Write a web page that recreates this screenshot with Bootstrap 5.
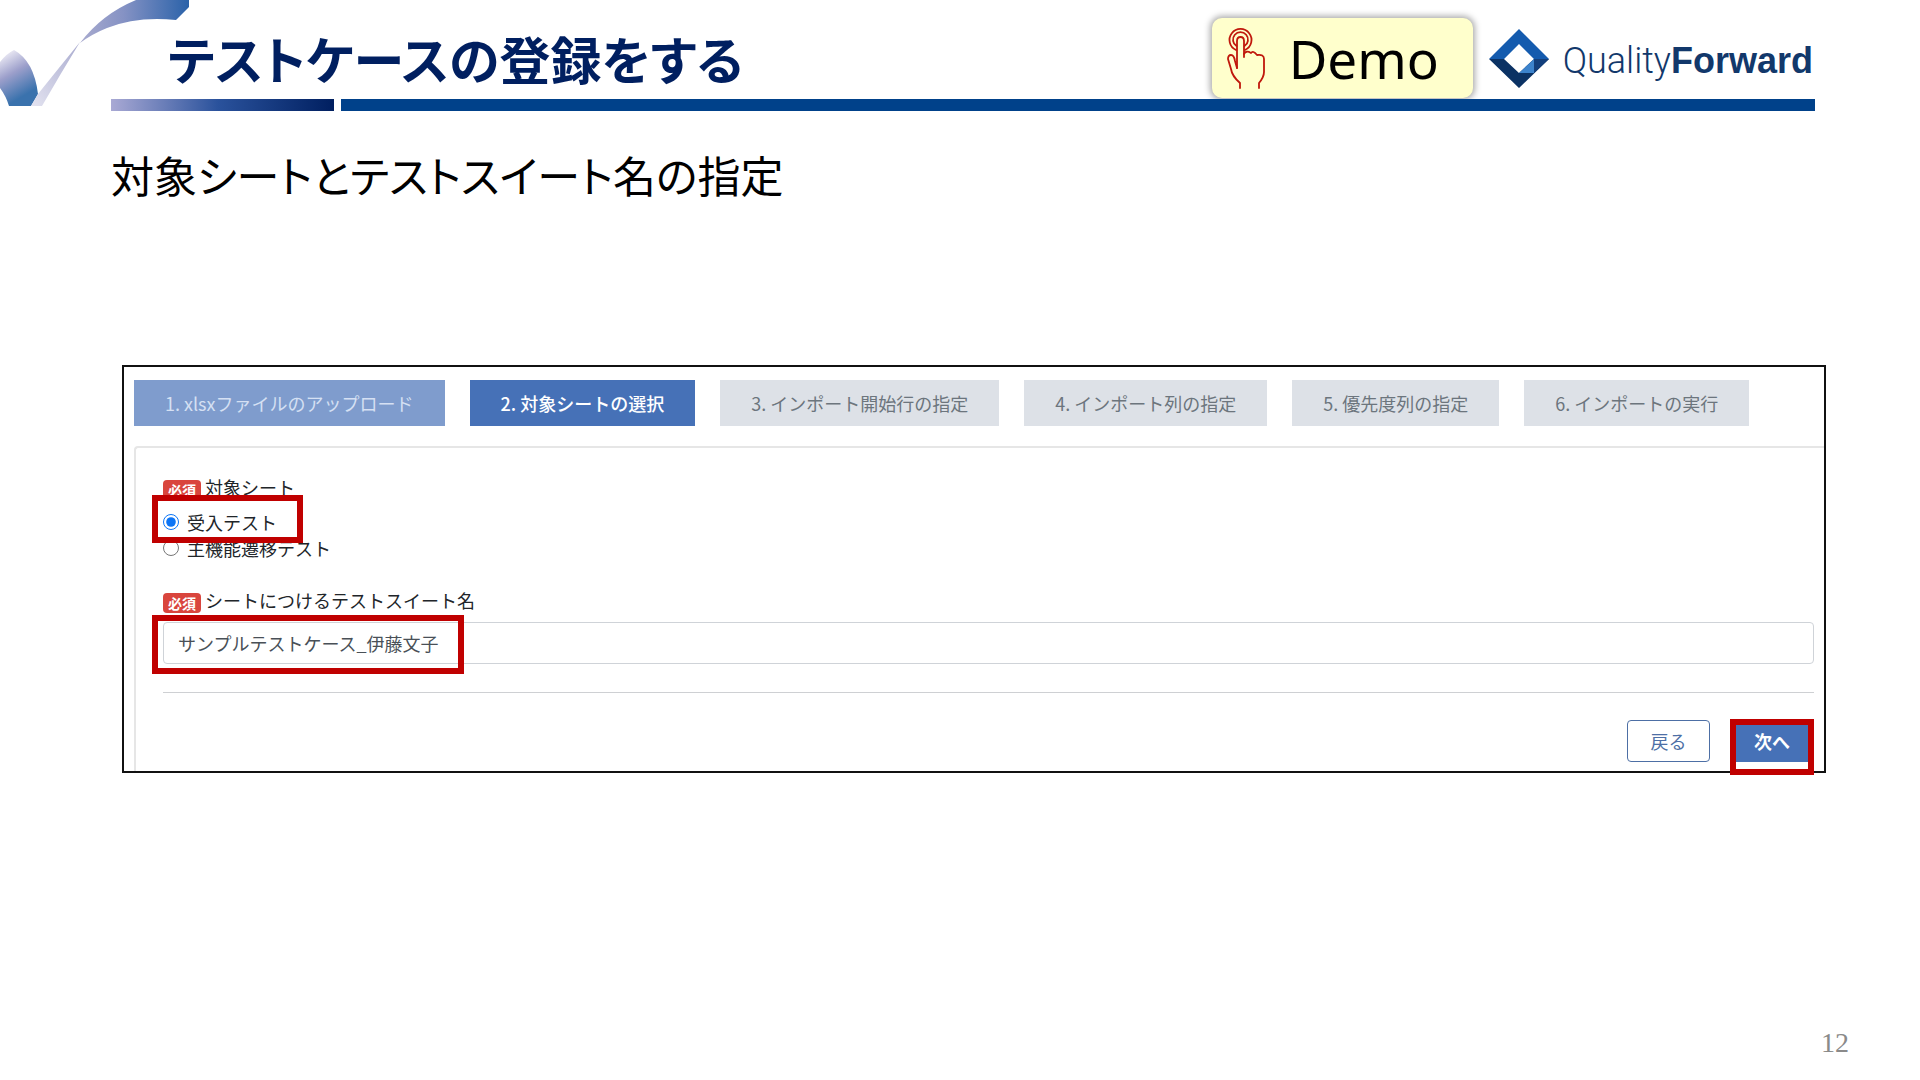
<!DOCTYPE html>
<html lang="ja">
<head>
<meta charset="utf-8">
<meta name="viewport" content="width=device-width, initial-scale=1">
<title>テストケースの登録をする</title>
<link href="https://cdn.jsdelivr.net/npm/bootstrap@5.3.0/dist/css/bootstrap.min.css" rel="stylesheet">
<style>
  body { font-family: "Noto Sans CJK JP", sans-serif; background: #fff; color: #212529; font-size: 18px; line-height: 27px; }
  .slide-head { padding: 18px 105px 0 111px; }
  .head-row { height: 81px; }
  .swoosh { position: absolute; left: 0; top: 0; }
  .slide-title { color: #001f60; font-size: 51px; line-height: 60px; font-weight: 700; font-feature-settings: "palt"; padding-left: 57px; margin-top: 10px; }
  .demo-box { width: 261px; height: 80px; background: #ffc; border-radius: 10px; box-shadow: 0 0 6px 2px #aaa; padding: 2px 0 0 15px; gap: 22px; font-family: "Noto Sans", sans-serif; font-size: 53px; line-height: 78px; color: #000; }
  .brand { margin: 11px 2px 0 16px; gap: 14px; color: #12386b; font-size: 36px; line-height: 48px; }
  .brand-thin { font-family: Roboto, sans-serif; font-weight: 300; }
  .brand-bold { font-family: "Liberation Sans", sans-serif; font-weight: 700; }
  .rule { gap: 7px; }
  .rule-short { width: 223px; height: 12px; background: linear-gradient(90deg, #a9a9d4, #2a529c 48%, #001f60); }
  .rule-long { height: 12px; background: #00418a; }
  .slide-sub { font-size: 43px; line-height: 60px; font-weight: 400; color: #000; font-feature-settings: "palt"; margin: 33px 0 0 111px; }
  .shot { margin: 161px 94px 0 122px; border: 2px solid #111; padding: 13px 0 0 10px; }
  .steps { gap: 25px; }
  .step { background: #dde1e7; color: #6c757d; padding: 10px 31px 9px; white-space: nowrap; }
  .step.done { background: #7f9ccd; color: #d5e0f3; }
  .step.now { background: #4671b7; color: #fff; font-weight: 500; }
  .pane { margin-top: 20px; border: solid #e6e6e6; border-width: 2px 0 0 2px; border-top-left-radius: 4px; padding: 26px 10px 9px 27px; }
  .need { background: #d9453d; color: #fff; font-size: 14px; line-height: 20px; font-weight: 700; border-radius: 4px; padding: 0 5px; margin-top: 6px; }
  .lab { gap: 4px; }
  .lab-name { margin-top: 26px; }
  .opt { gap: 8px; line-height: 26px; }
  .opt input { width: 16px; height: 16px; margin: 0; accent-color: #0b74f5; }
  .opts { margin-top: 8px; }
  .mark-frame { position: absolute; border: 6px solid #c00000; pointer-events: none; }
  .frame-opt { left: -11px; top: -14px; width: 151px; height: 48px; }
  .frame-name { left: -11px; top: -7px; width: 312px; height: 59px; }
  .frame-next { left: 0; top: -1px; width: 84px; height: 56px; }
  .name-box { height: 42px; font-size: 18px; line-height: 27px; color: #495057; border-color: #cfd3d8; border-radius: 4px; padding: 6px 14px; }
  .cut { height: 1px; background: #ced0d3; margin: 28px 0 27px; }
  .acts { gap: 20px; }
  .acts .btn { font-size: 18px; line-height: 27px; height: 42px; padding: 6px 0; border-radius: 4px; }
  .btn-back { width: 83px; border: 1px solid #4d6fa5; color: #4d6fa5; background: #fff; }
  .btn-next { width: 84px; background: #4671b7; color: #fff; font-weight: 700; }
  .page-no { font-family: "Liberation Serif", serif; font-size: 28px; line-height: 32px; color: #8a8a8a; padding: 0 71px 21px 0; }
</style>
<script src="https://cdn.jsdelivr.net/npm/bootstrap@5.3.0/dist/js/bootstrap.bundle.min.js"></script>
</head>
<body>
<div class="d-flex flex-column min-vh-100">
  <header class="slide-head position-relative">
    <svg class="swoosh" width="192" height="108" viewBox="0 0 192 108" aria-hidden="true">
      <defs>
        <linearGradient id="g1" x1="0.2" y1="0" x2="0.6" y2="1"><stop offset="0" stop-color="#f1eff7"/><stop offset=".4" stop-color="#9c9fcb"/><stop offset=".85" stop-color="#3a72ad"/><stop offset="1" stop-color="#3a72ad"/></linearGradient>
        <linearGradient id="g2" x1="0" y1="1" x2="1" y2="0"><stop offset="0" stop-color="#e3e3f0"/><stop offset="1" stop-color="#a9abcf"/></linearGradient>
        <linearGradient id="g3" x1="0" y1="0" x2="1" y2="0"><stop offset="0" stop-color="#a9abcf"/><stop offset=".4" stop-color="#8592c4"/><stop offset="1" stop-color="#2a62a9"/></linearGradient>
      </defs>
      <path d="M0 62Q6 54 14 50Q34 61 38 94L31 106H9Q6 96 0 88Z" fill="url(#g1)"/>
      <path d="M31 106L38 94Q58 69 80 42Q61 73 42 106Z" fill="url(#g2)"/>
      <path d="M80 43Q102 14 136 0H189V7L176 20Q137 16 107 28Q92 34 80 43Z" fill="url(#g3)"/>
    </svg>
    <div class="head-row d-flex align-items-start">
      <h1 class="slide-title mb-0 me-auto">テストケースの登録をする</h1>
      <div class="demo-box d-flex align-items-center">
        <svg width="40" height="62" viewBox="0 0 40 62" fill="none" stroke="#c0180c" stroke-width="1.8" stroke-linejoin="round" stroke-linecap="round" aria-hidden="true">
          <path d="M9 22A11 11 0 1 1 18 22"/>
          <path d="M9.500 18A7.500 7.500 0 1 1 17.500 18"/>
          <path d="M10 40V13Q10 9 13.500 9Q17 9 17 13V26Q19 22 24 25Q26 22 30 27Q37 26 37 31V44Q37 49 32 55V60"/>
          <path d="M10 40L8 33Q7 27 4 27Q1 27 1 31L4 41Q5 48 13 55V60M17 26V29"/>
        </svg>
        <span>Demo</span>
      </div>
      <div class="brand d-flex align-items-center">
        <svg width="60" height="60" viewBox="0 0 60 60" aria-hidden="true">
          <path d="M30 0L60 30H45L30 15L15 30H0Z" fill="#145bae"/>
          <path d="M0 30H15L30 44L45 30H60L30 59Z" fill="#0b3264"/>
          <path d="M45 30H60L45 44Z" fill="#123f7c"/>
          <path d="M45 30V44H30Z" fill="#3c83cc"/>
        </svg>
        <div class="text-nowrap"><span class="brand-thin">Quality</span><span class="brand-bold">Forward</span></div>
      </div>
    </div>
    <div class="rule d-flex position-relative">
      <div class="rule-short"></div>
      <div class="rule-long flex-grow-1"></div>
    </div>
  </header>

  <main>
    <h2 class="slide-sub">対象シートとテストスイート名の指定</h2>
    <section class="shot">
      <ol class="steps d-flex list-unstyled mb-0">
        <li class="step done">1. xlsxファイルのアップロード</li>
        <li class="step now">2. 対象シートの選択</li>
        <li class="step">3. インポート開始行の指定</li>
        <li class="step">4. インポート列の指定</li>
        <li class="step">5. 優先度列の指定</li>
        <li class="step">6. インポートの実行</li>
      </ol>
      <form class="pane">
        <div role="radiogroup" aria-labelledby="sheetLab">
          <div class="lab d-flex align-items-start"><span class="need">必須</span><span id="sheetLab">対象シート</span></div>
          <div class="opts position-relative">
            <div class="opt d-flex align-items-center"><input type="radio" name="sheet" id="s1" checked><label for="s1">受入テスト</label></div>
            <div class="opt d-flex align-items-center"><input type="radio" name="sheet" id="s2"><label for="s2">主機能遷移テスト</label></div>
            <div class="mark-frame frame-opt"></div>
          </div>
        </div>
        <div class="lab lab-name d-flex align-items-start"><span class="need">必須</span><label for="suite">シートにつけるテストスイート名</label></div>
        <div class="position-relative mt-2">
          <input type="text" class="form-control name-box" id="suite" value="サンプルテストケース_伊藤文子">
          <div class="mark-frame frame-name"></div>
        </div>
        <div class="cut"></div>
        <div class="acts d-flex justify-content-end">
          <button type="button" class="btn btn-back">戻る</button>
          <div class="position-relative">
            <button type="button" class="btn btn-next">次へ</button>
            <div class="mark-frame frame-next"></div>
          </div>
        </div>
      </form>
    </section>
  </main>
  <footer class="page-no mt-auto text-end">12</footer>
</div>
</body>
</html>
